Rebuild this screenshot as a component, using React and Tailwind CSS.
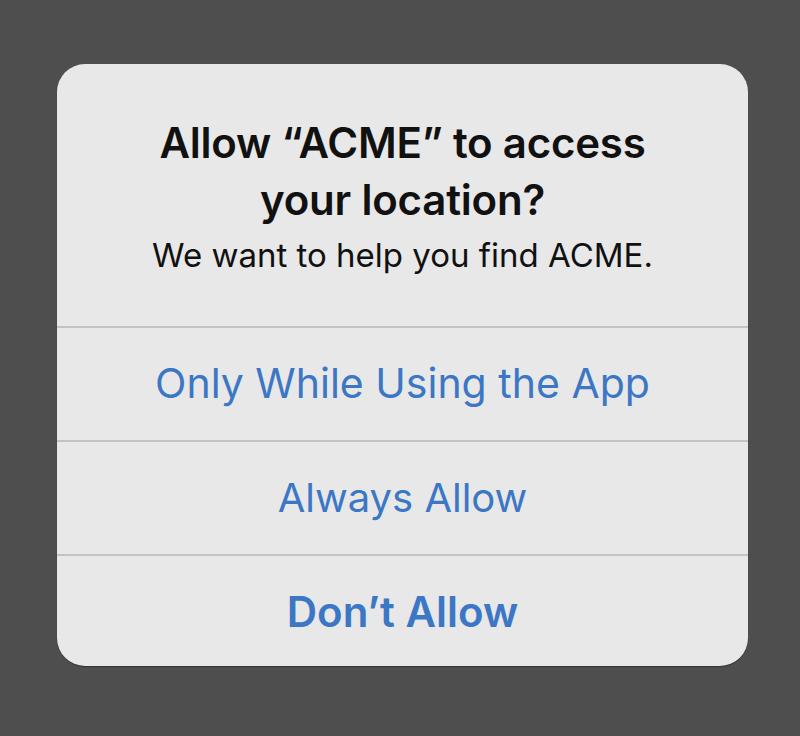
export default function App() {
  const font = { fontFamily: 'Inter, "Liberation Sans", sans-serif' };
  return (
    <div className="w-[800px] h-[736px] bg-[#4d4e4d] pt-[64px] pl-[57px]" style={font}>
      <div className="w-[691px] h-[602px] bg-[#e8e8e8] rounded-[28px] overflow-hidden flex flex-col shadow-[0_1px_1px_rgba(0,0,0,0.35)]">
        <div className="h-[262px] pt-[50px] flex flex-col items-center text-center">
          <div className="text-[42px] leading-[57px] font-semibold tracking-[-0.005em] text-[#111]">
            Allow “ACME” to access
            <br />
            your location?
          </div>
          <div className="text-[33px] leading-[40px] text-[#111] mt-[7px]">
            We want to help you find ACME.
          </div>
        </div>
        <div className="h-[114px] border-t-2 border-[#c3c3c3] flex items-center justify-center text-[41px] text-[#3b77c5]">
          Only While Using the App
        </div>
        <div className="h-[114px] border-t-2 border-[#c3c3c3] flex items-center justify-center text-[40px] text-[#3b77c5]">
          Always Allow
        </div>
        <div className="flex-1 border-t-2 border-[#c3c3c3] flex items-center justify-center text-[42px] font-semibold text-[#3b77c5]">
          Don’t Allow
        </div>
      </div>
    </div>
  );
}
